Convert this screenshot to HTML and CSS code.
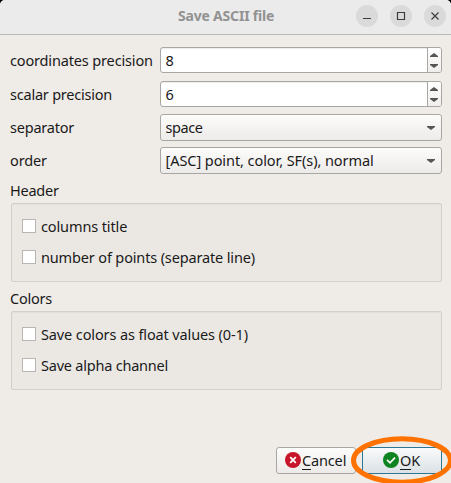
FILE: index.html
```
<!DOCTYPE html>
<html lang="en">
<head>
<meta charset="utf-8">
<title>Save ASCII file</title>
<link rel="stylesheet" href="styles.css">
</head>
<body>
<div class="dialog">
  <header class="titlebar">
    <h1 class="title"><span>Save ASCII file</span></h1>
    <div class="controls">
      <svg class="control" viewBox="0 0 22 22"><path d="M7 13.500h8"/></svg>
      <svg class="control" viewBox="0 0 22 22"><path d="M7.500 7.500h7v7h-7z"/></svg>
      <svg class="control" viewBox="0 0 22 22"><path d="M7.500 7.500l7 7M14.500 7.500l-7 7"/></svg>
    </div>
  </header>
  <main class="content">
    <div class="row spin-row">
      <label><span class="t-coord">coordinates precision</span></label>
      <div class="spin"><span class="value">8</span><div class="steps"><svg viewBox="0 0 13 24"><path d="M2 9v-1l4-3 4 3v1zM2 16h8v1l-4 3-4-3z"/></svg></div></div>
    </div>
    <div class="row spin-row">
      <label><span class="t-scalar">scalar precision</span></label>
      <div class="spin"><span class="value">6</span><div class="steps"><svg viewBox="0 0 13 24"><path d="M2 9v-1l4-3 4 3v1zM2 16h8v1l-4 3-4-3z"/></svg></div></div>
    </div>
    <div class="row combo-row">
      <label><span class="t-sep">separator</span></label>
      <div class="combo"><span class="t-space">space</span><svg viewBox="0 0 8 4"><path d="M0 0h8v1L4 4 0 1z"/></svg></div>
    </div>
    <div class="row combo-row">
      <label><span class="t-order">order</span></label>
      <div class="combo"><span class="t-asc">[ASC] point, color, SF(s), normal</span><svg viewBox="0 0 8 4"><path d="M0 0h8v1L4 4 0 1z"/></svg></div>
    </div>
    <h2><span class="t-header">Header</span></h2>
    <section class="group">
      <div class="check"><i class="box"></i><span class="t-cols">columns title</span></div>
      <div class="check"><i class="box"></i><span class="t-num">number of points (separate line)</span></div>
    </section>
    <h2><span class="t-colors">Colors</span></h2>
    <section class="group">
      <div class="check"><i class="box"></i><span class="t-float">Save colors as float values (0-1)</span></div>
      <div class="check"><i class="box"></i><span class="t-alpha">Save alpha channel</span></div>
    </section>
  </main>
  <footer class="actions">
    <div class="button cancel">
      <svg class="icon" viewBox="0 0 16 16"><circle cx="8" cy="8" r="8" fill="#c7162b"/><path d="M5.200 5.200l5.600 5.600M10.800 5.200l-5.600 5.600" stroke="#fff" stroke-width="1.900"/></svg>
      <span class="t-cancel"><span class="key">C</span>ancel</span>
    </div>
    <div class="button ok">
      <svg class="icon" viewBox="0 0 16 16"><circle cx="8" cy="8" r="8" fill="#0e8420"/><path d="M4 7.800l3 3 5-5.200" fill="none" stroke="#fff" stroke-width="1.700"/></svg>
      <span class="t-ok"><span class="key">O</span>K</span>
    </div>
  </footer>
  <svg class="highlight" viewBox="0 0 101 50"><ellipse cx="52" cy="27.500" rx="48.500" ry="21.700"/></svg>
</div>
</body>
</html>
```
FILE: styles.css
```
* { box-sizing: border-box; }
body {
  margin: 0;
  background: #000;
  color: #1a1a1a;
  font: 14.5px/20px "Noto Sans", "Open Sans", sans-serif;
}
.dialog {
  position: relative;
  display: flex;
  flex-direction: column;
  width: 451px;
  height: 483px;
  overflow: hidden;
  background: #efebe7;
  border-radius: 5px 5px 0 0;
}
.titlebar {
  display: grid;
  grid-template-columns: 1fr auto;
  align-items: center;
  height: 35px;
  padding: 0 5px 2px 0;
  background: #ebebeb;
  border-bottom: 1px solid #b9b9b9;
}
.title {
  margin: 0;
  padding-left: 178px;
  font-size: 14px;
  font-weight: 700;
  line-height: 20px;
  letter-spacing: -0.2px;
  color: #929292;
  white-space: nowrap;
}
.controls { display: flex; gap: 12px; }
.control {
  width: 22px;
  height: 22px;
  border-radius: 50%;
  background: #dadada;
  fill: none;
  stroke: #3d3d3d;
  stroke-width: 1.2;
}
.content { padding: 12px 9px 0 10px; }
.row { display: grid; grid-template-columns: 150px 282px; align-items: center; }
.spin-row { height: 26px; margin-bottom: 8px; }
.combo-row { height: 27px; margin-bottom: 6px; }
.combo-row label, .combo span { padding-bottom: 2px; }
.spin-row + .combo-row { margin-top: -1px; }
label, .value, .combo span, .check span, h2, .button span { white-space: nowrap; }
.t-coord, .t-num { letter-spacing: -0.15px; }
.t-scalar, .t-sep, .t-alpha { letter-spacing: -0.22px; }
.t-order, .t-asc, .t-cols, .t-float { letter-spacing: -0.12px; }
.t-asc { letter-spacing: -0.07px; }
.t-space { letter-spacing: -0.4px; }
.t-header, .t-colors { letter-spacing: -0.25px; }
.spin, .combo {
  display: flex;
  align-items: center;
  height: 100%;
  padding-left: 4.5px;
  border: 1px solid #a9a7a4;
  border-radius: 3px;
}
.spin { background: #fff; justify-content: space-between; box-shadow: inset 0 1px #ededed; }
.steps {
  width: 14px;
  height: 24px;
  border-left: 1px solid #a9a7a4;
  background: linear-gradient(#fff, #f0eeec);
  border-radius: 0 2px 2px 0;
}
.steps svg { display: block; width: 13px; height: 24px; fill: #555; }
.combo {
  justify-content: space-between;
  padding-right: 6px;
  background: linear-gradient(#fcfcfb, #edebe9);
}
.combo svg { width: 8px; height: 4px; fill: #555; }
h2 { margin: 0; height: 23px; font-size: inherit; font-weight: 400; }
.group {
  display: flex;
  flex-direction: column;
  gap: 11px;
  width: 431px;
  height: 79px;
  margin-left: 1px;
  padding: 12px 10px;
  background: #ebe8e4;
  border: 1px solid #d2cfcc;
  border-radius: 2px;
  box-shadow: inset 0 1px 1px #e2dfdb;
}
.group + h2 { height: 29px; padding-top: 6px; }
.check { display: flex; align-items: center; gap: 5px; height: 20px; }
.box { width: 14px; height: 14px; background: #fff; border: 1px solid #b8b5b2; }
.actions {
  display: flex;
  justify-content: flex-end;
  gap: 6px;
  margin-top: auto;
  padding: 0 9px 9px;
}
.button {
  display: flex;
  align-items: center;
  gap: 1px;
  width: 80px;
  height: 27px;
  padding-left: 8px;
  border: 1px solid #a9a7a4;
  border-radius: 3px;
  background: linear-gradient(#fcfcfb, #edebe9);
}
.ok { padding-left: 20px; border-color: #2c7696; background: linear-gradient(#f9fafb, #dbe1e5); }
.icon { width: 16px; height: 16px; flex: none; margin-bottom: 1px; }
.t-cancel, .t-ok { padding-bottom: 2px; letter-spacing: -0.15px; }
.key { box-shadow: inset 0 -1px #1a1a1a; }
.highlight {
  position: absolute;
  left: 350px;
  top: 433px;
  width: 101px;
  height: 50px;
  fill: none;
  stroke: #ff7200;
  stroke-width: 5;
}
```
